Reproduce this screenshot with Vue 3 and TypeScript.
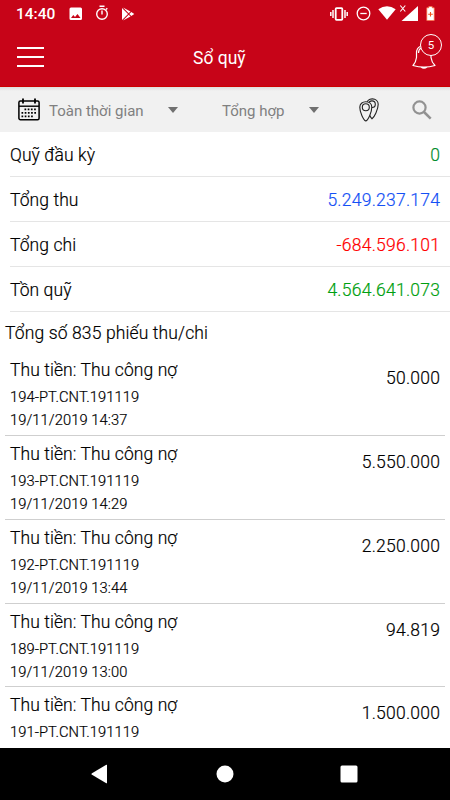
<script setup lang="ts">
interface SummaryRow {
  label: string
  value: string
  tone: 'green' | 'blue' | 'red' | 'leaf'
}

interface Voucher {
  title: string
  code: string
  time: string
  amount: string
}

const summary: SummaryRow[] = [
  { label: 'Quỹ đầu kỳ', value: '0', tone: 'green' },
  { label: 'Tổng thu', value: '5.249.237.174', tone: 'blue' },
  { label: 'Tổng chi', value: '-684.596.101', tone: 'red' },
  { label: 'Tồn quỹ', value: '4.564.641.073', tone: 'leaf' },
]

const vouchers: Voucher[] = [
  { title: 'Thu tiền: Thu công nợ', code: '194-PT.CNT.191119', time: '19/11/2019 14:37', amount: '50.000' },
  { title: 'Thu tiền: Thu công nợ', code: '193-PT.CNT.191119', time: '19/11/2019 14:29', amount: '5.550.000' },
  { title: 'Thu tiền: Thu công nợ', code: '192-PT.CNT.191119', time: '19/11/2019 13:44', amount: '2.250.000' },
  { title: 'Thu tiền: Thu công nợ', code: '189-PT.CNT.191119', time: '19/11/2019 13:00', amount: '94.819' },
  { title: 'Thu tiền: Thu công nợ', code: '191-PT.CNT.191119', time: '', amount: '1.500.000' },
]
</script>

<template>
  <div class="screen">
    <header class="header">
      <div class="status">
        <span class="clock">14:40</span>
        <svg class="picture" width="14" height="14" viewBox="0 0 14 14">
          <path fill="#fff" fill-rule="evenodd" d="M2 .5h9.500q1.500 0 1.500 1.500v9.500q0 1.500-1.500 1.500H2q-1.500 0-1.500-1.500V2Q.5.5 2 .5zM2 11h9.500L8.500 7 6 10 4.300 8z" />
        </svg>
        <svg class="timer" width="14" height="16" viewBox="0 0 14 16" fill="none" stroke="#fff" stroke-width="1.400">
          <circle cx="7" cy="9" r="5.300" /><path d="M4.500 1.200h5M7 5.500v4M11 4.500l1.300-1.300" />
        </svg>
        <svg class="play" width="14" height="14" viewBox="0 0 14 14">
          <path fill="#fff" d="M1 1v12l6-6zM2 .5l5.700 5.800 1.800-1.700zM2 13.500l5.700-5.800 1.800 1.700zM10.300 5L8.300 7l2 2L13.300 7z" />
        </svg>
        <span class="spacer"></span>
        <svg class="vibrate" width="18" height="14" viewBox="0 0 18 14" fill="none" stroke="#fff" stroke-width="1.500">
          <rect x="5.700" y="1.200" width="6.600" height="11.600" rx=".8" stroke-width="1.800" /><path d="M3 3v8M.8 5v4M15 3v8M17.200 5v4" />
        </svg>
        <svg class="dnd" width="15" height="15" viewBox="0 0 15 15" fill="none" stroke="#fff" stroke-width="1.300">
          <circle cx="7.500" cy="7.500" r="6.300" /><path d="M4.300 7.500h6.400" />
        </svg>
        <svg class="wifi" width="18" height="14" viewBox="0 0 18 14">
          <path fill="#fff" d="M.3 3.200Q9-2.700 17.700 3.200L9 13.700z" />
        </svg>
        <svg class="signal" width="20" height="17" viewBox="0 0 20 17">
          <path fill="#fff" d="M19 2v15H2.500z" /><path d="M1.300 1.500l5 6M6.300 1.500l-5 6" stroke="#fff" stroke-width="1.100" />
        </svg>
        <svg class="battery" width="9" height="15" viewBox="0 0 9 15">
          <path fill="#fff" stroke="#ff7043" stroke-width=".7" d="M2.800.5h3.400v1.300h2v12.700H.8V1.800h2z" />
          <path d="M2.200 8.300h4.600M4.500 6v4.600" stroke="#f4511e" stroke-width="1.100" />
        </svg>
      </div>
      <div class="appbar">
        <button class="menu" aria-label="Menu"><i></i><i></i><i></i></button>
        <h1>Sổ quỹ</h1>
        <div class="bell">
          <svg width="24" height="28" viewBox="0 0 24 28" fill="none" stroke="#fff" stroke-width="1.200" stroke-linejoin="round">
            <path d="M8.500 4.300Q4.500 6 4.500 11v4.500Q4 20 1 23.500q11 3.400 22 0-3.500-3.500-4-8V11q0-5-4-6.800M6.500 11q0-3.500 2.500-5M8.800 4q.2-2.500 3-2.500t3 2.500M9 25q3 2.500 6 0" />
          </svg>
          <span class="badge">5</span>
        </div>
      </div>
    </header>

    <section class="filters">
      <svg class="calendar" width="22" height="23" viewBox="0 0 22 23" fill="none" stroke="#000">
        <rect x=".9" y="3" width="20.200" height="18.700" rx="1.500" stroke-width="1.500" />
        <path d="M1 8.200h20" stroke-width="1.400" />
        <path d="M5 .5v5M17 .5v5" stroke-width="1.800" />
        <path d="M6.500 11.300h12M3.500 14.800h15M3.500 18.300h12" stroke-width="1.700" stroke-dasharray="1.700 1.500" />
      </svg>
      <span class="period">Toàn thời gian</span>
      <i class="caret"></i>
      <span class="kind">Tổng hợp</span>
      <i class="caret"></i>
      <svg class="pins" width="20" height="24" viewBox="0 0 20 24" fill="#f1f1f1" stroke="#222" stroke-width="1.100">
        <path d="M13 20.800C11 19 7.500 12 7.500 6.300 7.500 3 10 .9 13.300.9s5.900 2.200 5.900 5.400c0 5.200-4 13-6.200 14.500z" />
        <circle cx="13" cy="6.200" r="3.300" />
        <path d="M6.800 23C4.500 22 .8 14.500.8 9.300c0-3.300 2.600-5.600 6-5.600s6 2.300 6 5.600c0 5.200-3.700 12.700-6 13.700z" />
        <circle cx="6.800" cy="9.300" r="3.500" />
      </svg>
      <svg class="search" width="20" height="20" viewBox="0 0 20 20" fill="none" stroke="#929292" stroke-width="2.200">
        <circle cx="7.500" cy="7.500" r="6.100" /><path d="M12 12l6.700 6.700" stroke-width="2.500" />
      </svg>
    </section>

    <main class="content">
      <div class="summary">
        <div v-for="row in summary" :key="row.label" class="summary-row">
          <span>{{ row.label }}</span>
          <span class="figure" :class="row.tone">{{ row.value }}</span>
        </div>
      </div>
      <p class="count">Tổng số 835 phiếu thu/chi</p>
      <article v-for="item in vouchers" :key="item.code" class="voucher">
        <div>
          <div class="title">{{ item.title }}</div>
          <div class="detail">{{ item.code }}</div>
          <div class="detail">{{ item.time }}</div>
        </div>
        <span class="amount figure">{{ item.amount }}</span>
      </article>
    </main>

    <nav class="navbar">
      <svg width="18" height="20" viewBox="0 0 18 20"><path fill="#fff" d="M16 1v18q0 .5-.7.300L1 10.800q-1.200-.8 0-1.600L15.300.7q.7-.2.700.3z" /></svg>
      <svg width="18" height="18" viewBox="0 0 18 18"><circle cx="9" cy="9" r="8.500" fill="#fff" /></svg>
      <svg width="18" height="18" viewBox="0 0 18 18"><rect x=".5" y=".5" width="17" height="17" rx="1.500" fill="#fff" /></svg>
    </nav>
  </div>
</template>

<style>
body {
  margin: 0;
}
</style>

<style scoped>
.screen {
  display: flex;
  flex-direction: column;
  width: 450px;
  height: 800px;
  overflow: hidden;
  background: #fff;
  color: #000;
  font-family: Roboto, 'Noto Sans', sans-serif;
  font-weight: 400;
}

svg {
  display: block;
  flex: none;
}

.header {
  box-sizing: border-box;
  height: 87px;
  flex: none;
  background: #c70418;
  color: #fff;
  border-bottom: 1px solid #cc0000;
}

.status {
  display: flex;
  align-items: center;
  height: 27px;
  padding: 0 15px 0 16px;
}

.clock {
  width: 53px;
  font-size: 15.5px;
  font-weight: 500;
  line-height: 28px;
}

.timer {
  margin-left: 12px;
  margin-top: -2px;
}

.play {
  margin-left: 12px;
}

.spacer {
  flex: 1;
}

.dnd {
  margin-left: 8px;
}

.wifi {
  margin-left: 7px;
  margin-top: -1px;
}

.signal {
  margin: -3px 0 0 3px;
}

.battery {
  margin-left: 7px;
}

.appbar {
  display: grid;
  grid-template-columns: 176px auto 1fr;
  align-items: center;
  height: 59px;
  padding: 0 14px 0 17px;
}

.menu {
  display: flex;
  flex-direction: column;
  gap: 7px;
  width: 27px;
  margin-top: 1px;
  padding: 0;
  border: 0;
  background: none;
}

.menu i {
  height: 2px;
  background: #fff;
}

h1 {
  margin: 2px 0 0;
  font-size: 17.5px;
  font-weight: 400;
  line-height: 24px;
}

.bell {
  position: relative;
  justify-self: end;
  margin-top: -1px;
}

.badge {
  position: absolute;
  top: -8px;
  left: 8px;
  box-sizing: border-box;
  width: 22px;
  height: 22px;
  border: 1.5px solid #fff;
  border-radius: 50%;
  background: #c70418;
  font-size: 11.5px;
  font-weight: 400;
  line-height: 21px;
  text-align: center;
}

.filters {
  display: flex;
  align-items: center;
  flex: none;
  height: 45px;
  padding: 0 18px;
  background: linear-gradient(#dedede, #f1f1f1 4px);
  box-sizing: border-box;
  color: #808080;
  font-size: 15px;
}

.period {
  width: 119px;
  margin: 2px 0 0 9px;
}

.kind {
  width: 87px;
  margin: 2px 0 0 44px;
}

.caret {
  width: 0;
  height: 0;
  border: 5.5px solid transparent;
  border-top: 6px solid #707070;
  border-bottom: 0;
}

.pins {
  margin-left: 40px;
}

.search {
  margin-left: 33px;
}

.content {
  flex: 1;
  min-height: 0;
  overflow: hidden;
  font-weight: 300;
  letter-spacing: 0.08px;
  -webkit-text-stroke: 0.2px currentColor;
}

.figure {
  margin-right: -0.2px;
  letter-spacing: 0.24px;
}

.summary {
  padding-left: 10px;
}

.summary-row {
  display: flex;
  align-items: center;
  justify-content: space-between;
  box-sizing: border-box;
  height: 45px;
  padding: 2px 10px 0 0;
  border-bottom: 1px solid #e5e5e5;
  font-size: 17.5px;
}

.green {
  color: #008c2c;
}

.blue {
  color: #1450f5;
}

.red {
  color: #f00;
}

.leaf {
  color: #00a010;
}

.count {
  height: 40.3px;
  margin: 0 0 0 5px;
  font-size: 17.5px;
  line-height: 43px;
  letter-spacing: 0.13px;
}

.voucher {
  display: flex;
  justify-content: space-between;
  box-sizing: border-box;
  height: 83.8px;
  margin: 0 5px;
  padding: 6px 5px 0;
  border-bottom: 1px solid #cfcfcf;
}

.title {
  height: 27px;
  font-size: 17.5px;
  line-height: 24px;
}

.detail {
  height: 23px;
  font-size: 14.7px;
  line-height: 25px;
}

.amount {
  font-size: 17.5px;
  line-height: 40px;
}

.navbar {
  display: flex;
  align-items: center;
  justify-content: space-between;
  flex: none;
  box-sizing: border-box;
  height: 52px;
  padding: 0 92px 0 91px;
  background: #000;
}
</style>
